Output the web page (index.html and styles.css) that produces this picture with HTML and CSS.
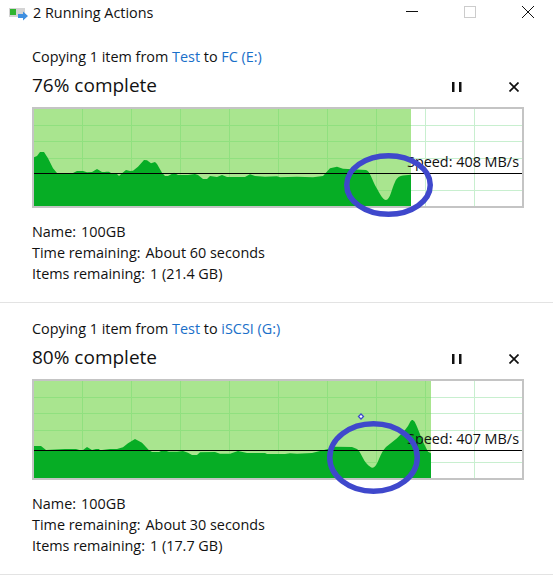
FILE: index.html
```html
<!DOCTYPE html>
<html lang="en">
<head>
<meta charset="utf-8">
<title>2 Running Actions</title>
<link rel="stylesheet" href="styles.css">
</head>
<body>
<header class="titlebar">
  <svg class="app-icon" width="20" height="14" viewBox="9 8 20 14">
    <rect x="9" y="8" width="16" height="9" fill="#d4d4d4"/>
    <rect x="10" y="9" width="6" height="6" fill="#2fb52f"/>
    <path d="M18 14h5v-2.500l5 4.500-5 4.500v-2.500h-5z" fill="#3f8fe0"/>
  </svg>
  <span class="title">2 Running Actions</span>
  <div class="window-controls">
    <svg width="12" height="12" viewBox="0 0 12 12"><path d="M0 5.500h12" stroke="#111" fill="none"/></svg>
    <svg width="12" height="12" viewBox="0 0 12 12"><rect x="0.500" y="0.500" width="11" height="11" stroke="#ccc" fill="none"/></svg>
    <svg width="12" height="12" viewBox="0 0 12 12"><path d="M0 0l12 12M12 0L0 12" stroke="#111" fill="none"/></svg>
  </div>
</header>

<section class="action">
  <div class="from">Copying 1 item from <a>Test</a> to <a>FC (E:)</a></div>
  <div class="status">
    <span class="percent">76% complete</span>
    <svg class="pause" width="10" height="10" viewBox="0 0 10 10"><path d="M0 0h2.500v10H0zM7 0h2.500v10H7z" fill="#111"/></svg>
    <svg class="cancel" width="10" height="10" viewBox="0 0 10 10"><path d="M0.500 0.500l9 9M9.500 0.500l-9 9" stroke="#111" stroke-width="1.700" fill="none"/></svg>
  </div>
  <div class="chart">
    <svg class="plot" width="492" height="101" viewBox="32 107 492 101">
      <rect x="34" y="109" width="488" height="97" fill="#fff"/>
      <rect x="34" y="109" width="377" height="97" fill="#a9e58f"/>
      <g class="grid-light">
        <path d="M425.500 109v97M474.500 109v97M411 125.500h111M411 141.500h111M411 158.500h111M411 190.500h111"/>
      </g>
      <g class="grid-dark">
        <path d="M82.500 109v97M131.500 109v97M180.500 109v97M229.500 109v97M278.500 109v97M327.500 109v97M376.500 109v97M34 125.500h377M34 141.500h377M34 158.500h377M34 190.500h377"/>
      </g>
      <path class="area" d="M34 157.300L37 156L40 152L44 152L48 158.300L53 168.300L57 173L73 173L77 171L83 171L87 172.300L92 172L97 169L102 172L105 172L106 171.700L109 171.700L111 173L117 174L119 176L122 173.300L126 170L130 171L133 170.700L138 166.700L144 160L147 160.300L151 163.300L155 162L157 164L162 172.700L165 176L168 176L174 172.700L178 175L188 175L195 174L198 175L203 179L207 179L210 176L217 177L222 175L227 177L245 177L250 174.300L255 176L265 176.700L277 176.300L280 177.300L297 176.700L313 177.300L323 176L330 168.300L337 166.700L343 168.700L366 170C370 171 372 180 376 187C380 194 383 200 386 200C390 200 392 188 395 182C397 177 400 176 403 175.500L411 174.700L411 206L34 206Z"/>
      <path class="baseline" d="M34 173.500h488"/>
      <rect x="33" y="108" width="490" height="99" fill="none" stroke="#c4c4c4" stroke-width="2"/>
    </svg>
    <span class="speed">Speed: 408 MB/s</span>
    <svg class="mark" width="492" height="101" viewBox="32 107 492 101">
      <ellipse cx="388.500" cy="185" rx="41.750" ry="29.250"/>
    </svg>
  </div>
  <dl class="details">
    <div class="row"><dt>Name:</dt><dd>100GB</dd></div>
    <div class="row"><dt>Time remaining:</dt><dd>About 60 seconds</dd></div>
    <div class="row"><dt>Items remaining:</dt><dd>1 (21.4 GB)</dd></div>
  </dl>
</section>

<section class="action action-second">
  <div class="from">Copying 1 item from <a>Test</a> to <a>iSCSI (G:)</a></div>
  <div class="status">
    <span class="percent">80% complete</span>
    <svg class="pause" width="10" height="10" viewBox="0 0 10 10"><path d="M0 0h2.500v10H0zM7 0h2.500v10H7z" fill="#111"/></svg>
    <svg class="cancel" width="10" height="10" viewBox="0 0 10 10"><path d="M0.500 0.500l9 9M9.500 0.500l-9 9" stroke="#111" stroke-width="1.700" fill="none"/></svg>
  </div>
  <div class="chart">
    <svg class="plot" width="492" height="101" viewBox="32 379 492 101">
      <rect x="34" y="381" width="488" height="97" fill="#fff"/>
      <rect x="34" y="381" width="397" height="97" fill="#a9e58f"/>
      <g class="grid-light">
        <path d="M474.500 381v97M431 397.500h91M431 413.500h91M431 430.500h91M431 462.500h91"/>
      </g>
      <g class="grid-dark">
        <path d="M82.500 381v97M131.500 381v97M180.500 381v97M229.500 381v97M278.500 381v97M327.500 381v97M376.500 381v97M425.500 381v97M34 397.500h397M34 413.500h397M34 430.500h397M34 462.500h397"/>
      </g>
      <path class="area" d="M34 446L41 446L46 450L65 449L76 449L82 450.700L87 447L92 450L96 449L99 449L100 450.300L110 449L117 449L123 447.300L128 443.300L135 439L142 442.700L149 450.300L152 452L159 452L163 450L169 451.700L177 451.700L183 451L188 452.700L192 455L197 455L200 452.300L215 452L220 453.700L230 453.700L238 451L247 453L265 453L267 454L285 454L290 453.300L297 453.700L312 453L327 449.300L335 446.700L352 447L357 449C361 452 363 460 367 464C369 466 371 467.700 372.500 467.700C375 467.700 377 464 379 459C381 454 383 450 386 447L397 438.300L405 430L408 426C410 422 411 420 412 420C414 420 415 422 417 426.700L423 441.700L428 451.700L431 453.300L431 478L34 478Z"/>
      <path class="baseline" d="M34 450.500h488"/>
      <rect x="33" y="380" width="490" height="99" fill="none" stroke="#c4c4c4" stroke-width="2"/>
    </svg>
    <span class="speed speed-second">Speed: 407 MB/s</span>
    <svg class="mark" width="492" height="101" viewBox="32 379 492 101">
      <ellipse cx="373.500" cy="457.500" rx="43.750" ry="33.750"/>
      <path class="dot" d="M361 414l2.500 2.500-2.500 2.500-2.500-2.500z"/>
    </svg>
  </div>
  <dl class="details">
    <div class="row"><dt>Name:</dt><dd>100GB</dd></div>
    <div class="row"><dt>Time remaining:</dt><dd>About 30 seconds</dd></div>
    <div class="row"><dt>Items remaining:</dt><dd>1 (17.7 GB)</dd></div>
  </dl>
</section>
</body>
</html>
```
FILE: styles.css
```css
* { box-sizing: border-box; }
html, body { margin: 0; padding: 0; background: #fff; }
body {
  width: 553px;
  height: 580px;
  overflow: hidden;
  font-family: "Open Sans", "Noto Sans", sans-serif;
  font-size: 14.4px;
  color: #111;
}
.titlebar {
  display: flex;
  align-items: center;
  height: 26px;
  padding-left: 9px;
}
.app-icon { margin-right: 4px; margin-top: 3px; }
.title { font-size: 14.4px; margin-bottom: 2px; }
.window-controls {
  display: flex;
  gap: 46px;
  margin-left: auto;
  margin-right: 19px;
  margin-bottom: 2px;
}
.action {
  padding: 20px 0 0 32px;
  height: 277px;
  border-bottom: 1px solid #e3e3e3;
}
.action-second { height: 272px; padding-top: 15px; }
.from { height: 21px; line-height: 21px; }
.from a { color: #1a6fc9; }
.status {
  display: flex;
  align-items: center;
  height: 30px;
  margin-top: 3px;
}
.percent { font-size: 19px; }
.pause { margin-left: auto; margin-right: 47px; margin-top: 4px; }
.cancel { margin-right: 34px; margin-top: 4px; }
.chart {
  position: relative;
  width: 492px;
  height: 101px;
  margin-top: 7px;
}
.plot { display: block; }
.grid-light path { stroke: #c8efcf; fill: none; }
.grid-dark path { stroke: #90e07f; fill: none; }
.area { fill: #06ad25; }
.baseline { stroke: #000; stroke-width: 1; fill: none; }
.speed {
  position: absolute;
  right: 5px;
  top: 44px;
  line-height: 21px;
}
.speed-second { top: 49px; }
.mark {
  position: absolute;
  left: 0;
  top: 0;
  overflow: visible;
  pointer-events: none;
}
.mark ellipse { fill: none; stroke: #3f48cc; stroke-width: 5.500; }
.mark .dot { fill: #fff; stroke: #3f48cc; stroke-width: 1.300; }
.details { margin: 13px 0 0; }
.row { display: flex; gap: 5px; height: 21px; line-height: 21px; }
.row dt, .row dd { margin: 0; }
```
